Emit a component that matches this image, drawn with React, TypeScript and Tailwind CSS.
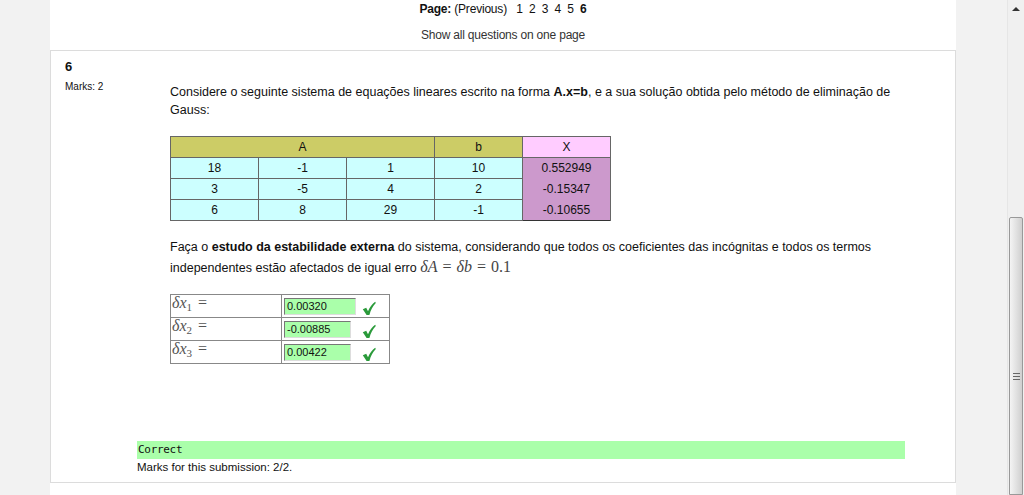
import React from "react";

const Check = () => (
  <svg width="14" height="15" viewBox="0 0 14 15" className="inline-block">
    <path d="M0.8 8.2 L4.2 6.8 L6 10.2 C7.8 6 10.2 3 13.2 0.8 L13.8 2 C10.8 5 8.8 8.8 7.4 14 L4.6 14 Z" fill="#2a9a3a" />
  </svg>
);

const MathVar = ({ sub }: { sub: string }) => (
  <span className="text-[16px] text-[#555]" style={{ fontFamily: '"Liberation Serif", serif' }}>
    <i>δx</i>
    <sub className="text-[11px]">{sub}</sub>
    <span className="ml-[6px]">=</span>
  </span>
);

export default function App() {
  const rows = [
    ["18", "-1", "1", "10", "0.552949"],
    ["3", "-5", "4", "2", "-0.15347"],
    ["6", "8", "29", "-1", "-0.10655"],
  ];
  const answers = [
    ["1", "0.00320", "w-[72px]", "ml-[6px]"],
    ["2", "-0.00885", "w-[67px]", "ml-[11px]"],
    ["3", "0.00422", "w-[67px]", "ml-[11px]"],
  ];
  return (
    <div
      className="w-[1024px] h-[495px] overflow-hidden flex bg-[#f2f2f2] text-[#111]"
      style={{ fontFamily: '"Liberation Sans", Arial, sans-serif' }}
    >
      <div className="flex-1 flex">
        <div className="w-[50px]" />
        <div className="w-[906px] bg-white flex flex-col">
          <div className="h-[50px] flex flex-col items-center text-[12px] pt-[1px]">
            <div className="h-[16px] leading-[16px] tracking-[-0.2px]">
              <b className="font-bold">Page:</b> (Previous)&nbsp;&nbsp; 1&nbsp; 2&nbsp; 3&nbsp; 4&nbsp; 5&nbsp; <b>6</b>
            </div>
            <div className="mt-[10px] h-[16px] leading-[16px] text-[#333] tracking-[-0.2px]">Show all questions on one page</div>
          </div>
          <div className="flex-1 border border-[#dcdcdc] flex flex-col h-[434px] max-h-[434px]">
            <div className="flex flex-1">
              <div className="w-[119px] pl-[14px] pt-[8px]">
                <div className="text-[13px] font-bold leading-[16px]">6</div>
                <div className="text-[10px] mt-[6px] leading-[12px]">Marks: 2</div>
              </div>
              <div className="flex-1 pt-[32px] text-[12.5px]">
                <p className="leading-[18px] pr-[50px]">
                  Considere o seguinte sistema de equações lineares escrito na forma <b>A.x=b</b>, e a sua solução obtida pelo método de eliminação de Gauss:
                </p>
                <table className="mt-[17px] border-collapse border border-[#333] text-[12px] text-center">
                  <thead>
                    <tr className="h-[21px]">
                      <th colSpan={3} className="bg-[#cccc66] border border-[#666] font-normal">A</th>
                      <th className="bg-[#cccc66] border border-[#666] font-normal w-[88px]">b</th>
                      <th className="bg-[#ffccff] border border-[#666] font-normal w-[88px]">X</th>
                    </tr>
                  </thead>
                  <tbody>
                    {rows.map((r, i) => (
                      <tr key={i} className="h-[21px]">
                        {r.slice(0, 4).map((c, j) => (
                          <td key={j} className="bg-[#ccffff] border border-[#666] w-[88px]">{c}</td>
                        ))}
                        <td className="bg-[#cc99cc] border-l border-[#666] border-r w-[88px]">{r[4]}</td>
                      </tr>
                    ))}
                  </tbody>
                </table>
                <p className="mt-[17px] leading-[19px] pr-[50px]">
                  Faça o <b>estudo da estabilidade externa</b> do sistema, considerando que todos os coeficientes das incógnitas e todos os termos independentes estão afectados de igual erro{" "}
                  <span className="text-[16px] text-[#444]" style={{ fontFamily: '"Liberation Serif", serif' }}>
                    <i>δA</i>
                    <span className="mx-[5px]">=</span>
                    <i>δb</i>
                    <span className="mx-[5px]">=</span>0.1
                  </span>
                </p>
                <table className="mt-[16px] border-collapse border border-[#222] text-[11px]">
                  <tbody>
                    {answers.map(([s, v, w, m]) => (
                      <tr key={s} className="h-[23px]">
                        <td className="w-[111px] border border-[#888] align-top pl-[1px] leading-[15px]">
                          <MathVar sub={s} />
                        </td>
                        <td className="w-[108px] border border-[#888] pl-[2px]">
                          <div className="flex items-center">
                            <div className={`${w} h-[17px] bg-[#aaffaa] border-t border-l border-[#777] border-b border-b-[#ddd] border-r border-r-[#ddd] pl-[2px] leading-[15px]`}>
                              {v}
                            </div>
                            <span className={`${m} mt-[3px]`}>
                              <Check />
                            </span>
                          </div>
                        </td>
                      </tr>
                    ))}
                  </tbody>
                </table>
              </div>
            </div>
            <div className="pl-[86px] pb-[8px]">
              <div className="w-[768px] h-[18px] bg-[#aaffaa] text-[11px] leading-[18px] pl-[1px] tracking-[-0.3px]" style={{ fontFamily: '"DejaVu Sans Mono", monospace' }}>
                Correct
              </div>
              <div className="text-[11.5px] mt-[1px] leading-[14px]">Marks for this submission: 2/2.</div>
            </div>
          </div>
          <div className="h-[12px]" />
        </div>
        <div className="w-[51px]" />
      </div>
      <div className="w-[17px] bg-[#f0f0f0] flex flex-col border-l border-[#e6e6e6]">
        <div className="h-[17px] flex items-center justify-center">
          <div className="w-0 h-0 border-l-[4px] border-r-[4px] border-b-[4px] border-l-transparent border-r-transparent border-b-[#333]" />
        </div>
        <div className="h-[200px]" />
        <div className="flex-1 ml-[1px] mr-[1px] rounded-t-[2px] border border-[#999] bg-gradient-to-r from-[#f4f4f4] via-[#e2e2e2] to-[#cfcfcf] flex flex-col items-center pt-[155px]">
          <div className="w-[7px] h-[1px] bg-[#666]" />
          <div className="w-[7px] h-[1px] bg-[#666] mt-[2px]" />
          <div className="w-[7px] h-[1px] bg-[#666] mt-[2px]" />
        </div>
      </div>
    </div>
  );
}
